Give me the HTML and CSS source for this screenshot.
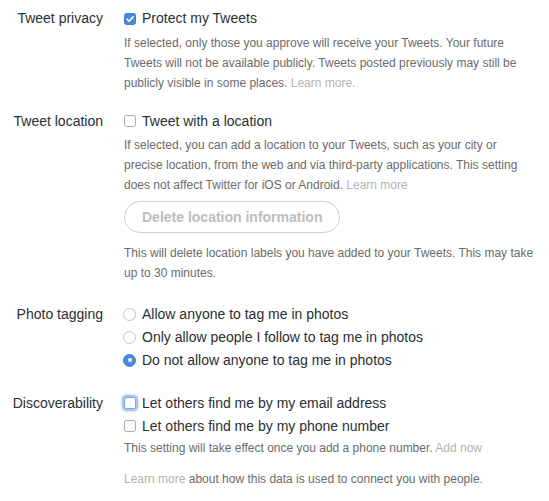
FILE: index.html
```html
<!DOCTYPE html>
<html lang="en">
<head>
<meta charset="utf-8">
<title>Privacy and safety</title>
<link rel="stylesheet" href="styles.css">
</head>
<body>
<div class="settings">
  <section class="row row-privacy">
    <div class="label">Tweet privacy</div>
    <div class="controls">
      <label class="option"><span class="box checked"><svg viewBox="0 0 12 12" width="12" height="12"><path d="M3 6.2 L5.1 8.3 L9.2 3.8" fill="none" stroke="#fff" stroke-width="1.6" stroke-linecap="round" stroke-linejoin="round"/></svg></span>Protect my Tweets</label>
      <p class="desc first">If selected, only those you approve will receive your Tweets. Your future<br>Tweets will not be available publicly. Tweets posted previously may still be<br>publicly visible in some places. <span class="muted">Learn more.</span></p>
    </div>
  </section>

  <section class="row row-location">
    <div class="label">Tweet location</div>
    <div class="controls">
      <label class="option"><span class="box"></span>Tweet with a location</label>
      <p class="desc first">If selected, you can add a location to your Tweets, such as your city or<br>precise location, from the web and via third-party applications. This setting<br>does not affect Twitter for iOS or Android. <span class="muted">Learn more</span></p>
      <button class="pill" type="button">Delete location information</button>
      <p class="desc after-btn">This will delete location labels you have added to your Tweets. This may take<br>up to 30 minutes.</p>
    </div>
  </section>

  <section class="row row-photo">
    <div class="label">Photo tagging</div>
    <div class="controls">
      <label class="option"><span class="radio"></span>Allow anyone to tag me in photos</label>
      <label class="option"><span class="radio"></span>Only allow people I follow to tag me in photos</label>
      <label class="option"><span class="radio on"></span>Do not allow anyone to tag me in photos</label>
    </div>
  </section>

  <section class="row row-disc">
    <div class="label">Discoverability</div>
    <div class="controls">
      <label class="option"><span class="box focus"></span>Let others find me by my email address</label>
      <label class="option"><span class="box"></span>Let others find me by my phone number</label>
      <p class="desc tight">This setting will take effect once you add a phone number. <span class="muted">Add now</span></p>
      <p class="desc learn"><span class="muted">Learn more</span> about how this data is used to connect you with people.</p>
    </div>
  </section>
</div>
</body>
</html>
```

FILE: styles.css
```css
html, body {
  margin: 0;
  padding: 0;
  background: #ffffff;
}

body {
  font-family: "Liberation Sans", Arial, Helvetica, sans-serif;
  color: #292f33;
}

.settings {
  display: flex;
  flex-direction: column;
  padding-top: 7px;
}

.row {
  display: grid;
  grid-template-columns: 103px 420px;
  column-gap: 21px;
  align-items: start;
}

.row-location { margin-top: 17.2px; }
.row-photo { margin-top: 20.2px; }
.row-disc { margin-top: 20px; }

.label {
  text-align: right;
  font-size: 14px;
  line-height: 23px;
  color: #292f33;
  white-space: nowrap;
}

.controls {
  display: flex;
  flex-direction: column;
  align-items: flex-start;
}

.option {
  display: flex;
  align-items: center;
  gap: 6px;
  font-size: 14px;
  line-height: 23px;
  color: #292f33;
  margin-left: -1px;
}

.box {
  width: 12px;
  height: 12px;
  box-sizing: border-box;
  border: 1px solid #a9a9a9;
  border-radius: 2.5px;
  background: #fff;
  display: inline-flex;
  align-items: center;
  justify-content: center;
  flex: none;
  margin-left: 1px;
}

.box.checked {
  background: #4a8ad8;
  border-color: #3f7fce;
}

.box svg {
  display: block;
  margin: -1px;
}

.box.focus {
  border-color: #7aa6dc;
  box-shadow: 0 0 0 2px #a9c7ec, 0 0 2px 3px #d4e3f5;
}

.radio {
  width: 13px;
  height: 13px;
  box-sizing: border-box;
  border: 1px solid #c4c4c4;
  border-radius: 50%;
  background: #fff;
  flex: none;
  position: relative;
}

.radio.on {
  background: #4a8ad8;
  border-color: #3e7ccb;
}

.radio.on::after {
  content: "";
  position: absolute;
  left: 50%;
  top: 50%;
  width: 4px;
  height: 4px;
  margin: -2px 0 0 -2px;
  border-radius: 50%;
  background: #fff;
}

.desc {
  margin: 0;
  font-size: 12px;
  line-height: 20px;
  color: #6b6b6b;
  white-space: nowrap;
}

.desc.first { margin-top: 2.5px; }
.desc.after-btn { margin-top: 9.6px; }
.desc.tight { margin-top: 0.5px; }
.desc.learn { margin-top: 11px; }

.muted {
  color: #b3b3b3;
}

.pill {
  margin-top: 6px;
  height: 32px;
  box-sizing: border-box;
  padding: 0 17px;
  border: 1px solid #d0d0d0;
  border-radius: 16px;
  background: #fff;
  font-family: "Liberation Sans", Arial, Helvetica, sans-serif;
  font-size: 14px;
  font-weight: bold;
  color: #bdbdbd;
  line-height: 30px;
}
```
